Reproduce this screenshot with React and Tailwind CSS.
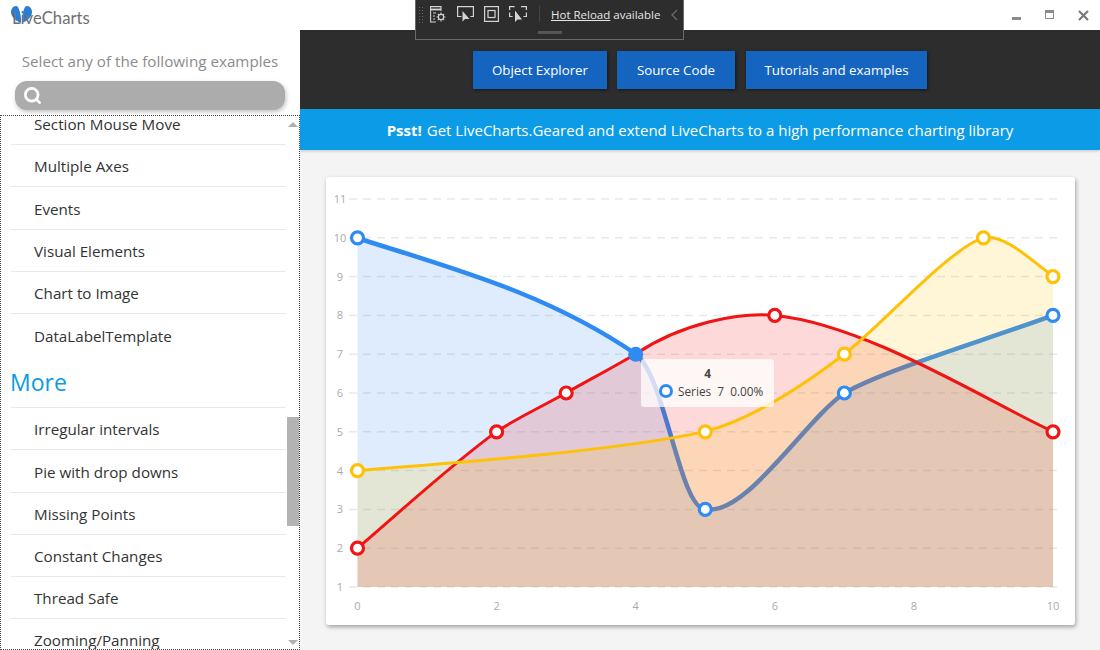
import { Search } from 'lucide-react';

const FONT = "font-['Open_Sans','Noto_Sans',sans-serif]";

const X = (v) => 357.5 + v * 69.55;
const Y = (v) => 587 - (v - 1) * 38.8;

const BLUE = [[0, 10], [4, 7], [5, 3], [7, 6], [10, 8]];
const RED = [[0, 2], [2, 5], [3, 6], [4, 7], [6, 8], [10, 5]];
const YELLOW = [[0, 4], [5, 5], [7, 7], [9, 10], [10, 9]];

// curves traced by hand from the picture, chart area pixel coordinates
const BLUE_LINE = 'M357.5 238 C450 268 545 292 635.7 354 C665 375 680 509 705 509 C745 518 805 420 844.5 393 C885 370 980 342 1053 315.400';
const RED_LINE = 'M357.5 548.200 C403.500 509 450.600 465 496.600 431.600 C519.600 416.600 543 406 566 393 C589 380 612.700 367.500 635.700 354 C682 323 740 312 775 315.400 C865 324 985 400 1053 431.600';
const YELLOW_LINE = 'M357.5 470.600 C470 462 620 450 705 431.600 C750 420 800 388 844.500 354 C880 327 950 248 983.600 237.600 C1003 234 1028 257 1053 276.400';

const GROUP_ONE = ['Multiple Axes', 'Events', 'Visual Elements', 'Chart to Image'];
const GROUP_TWO = ['Irregular intervals', 'Pie with drop downs', 'Missing Points', 'Constant Changes', 'Thread Safe'];

function Dots({ points, color }) {
  return points.map(([a, b]) => (
    <circle key={`${a}-${b}`} cx={X(a)} cy={Y(b)} r="6" fill="#fff" stroke={color} strokeWidth="3.2" />
  ));
}

function area(line, endX) {
  return `${line} L${endX} 587 L357.5 587 Z`;
}

function Chart() {
  return (
    <svg className="block" width="749" height="448" viewBox="326 177 749 448">
      <path d={area(BLUE_LINE, 1053)} fill="#2f8bf2" fillOpacity="0.16" />
      <path d={BLUE_LINE} fill="none" stroke="#2f8bf2" strokeWidth="4.5" />
      <path d={area(RED_LINE, 1053)} fill="#f01414" fillOpacity="0.16" />
      <path d={area(YELLOW_LINE, 1053)} fill="#ffc107" fillOpacity="0.16" />
      {[1, 2, 3, 4, 5, 6, 7, 8, 9, 10, 11].map((v) => (
        <g key={v}>
          <line x1="349" x2="1058" y1={Y(v)} y2={Y(v)} stroke="#8a8a8a" strokeOpacity="0.2" strokeWidth="1.5" strokeDasharray="8 6" />
          <text x="340" y={Y(v) + 4} textAnchor="middle" fontSize="11" fill="#aaa">{v}</text>
        </g>
      ))}
      {[0, 2, 4, 6, 8, 10].map((v) => (
        <text key={v} x={X(v)} y="610" textAnchor="middle" fontSize="11" fill="#aaa">{v}</text>
      ))}
      <path d={RED_LINE} fill="none" stroke="#f01414" strokeWidth="3" />
      <path d={YELLOW_LINE} fill="none" stroke="#ffc107" strokeWidth="3" />
      <Dots points={BLUE.filter(([a]) => a !== 4)} color="#2f8bf2" />
      <Dots points={RED.filter(([a]) => a !== 4)} color="#f01414" />
      <Dots points={YELLOW} color="#ffc107" />
      <circle cx={X(4)} cy={Y(7)} r="7.5" fill="#2f8bf2" />
    </svg>
  );
}

function Row({ label, line = true }) {
  return (
    <div className={`h-[42.2px] ml-[10px] mr-[13px] pl-[23px] pt-[2px] flex items-center text-[15.200px] text-[#333] ${line ? 'border-b border-[#e8e8e8]' : ''}`}>
      {label}
    </div>
  );
}

function ToolbarIcons() {
  return (
    <div className="ml-[6px] flex items-start text-[#d4d4d4]">
      <svg width="16" height="17" viewBox="0 0 16 17" fill="none" stroke="currentColor" strokeWidth="1.100">
        <path d="M6 16H.6V.6H11V5" />
        <path d="M.6 3.500H11" strokeWidth="1.800" />
        <path d="M3 7h3M3 10h2M3 13h2" />
        <circle cx="11" cy="11" r="2.600" />
        <path d="M11 6.500v1.500M11 14v1.500M6.500 11H8M14 11h1.500M7.800 7.800l1 1M13.200 13.200l1 1M14.200 7.800l-1 1M8.800 13.200l-1 1" />
      </svg>
      <svg className="ml-[11px]" width="17" height="16" viewBox="0 0 17 16" fill="none" stroke="currentColor" strokeWidth="1.200">
        <path d="M4.500 10.500H.6V.6h15.800v9.900h-3" />
        <path d="M5.500 5v10.500l2.500-2.500h4.500z" fill="currentColor" stroke="none" />
      </svg>
      <svg className="ml-[10px]" width="15" height="16" viewBox="0 0 15 16" fill="none" stroke="currentColor" strokeWidth="1.200">
        <rect x="0.6" y="0.6" width="13.800" height="14.800" />
        <rect x="4" y="4.500" width="7" height="7" />
      </svg>
      <svg className="ml-[10px]" width="18" height="16" viewBox="0 0 18 16" fill="none" stroke="currentColor" strokeWidth="1.200">
        <path d="M.6 4V.6h5M12 .6h5.400V4M.6 6.500v4h3M17.400 6.500v4h-3" />
        <path d="M6 4.500V16l2.500-2.500H13z" fill="currentColor" stroke="none" />
      </svg>
    </div>
  );
}

export default function App() {
  return (
    <div className={`relative w-[1100px] h-[650px] overflow-hidden bg-white flex flex-col ${FONT}`}>
      {/* title bar */}
      <header className="h-[30px] shrink-0 flex items-center justify-between bg-white">
        <div className="relative h-[30px] pl-[12px] font-['Lato',sans-serif] text-[16.700px] leading-[36px] text-[#707070]">
          <svg className="absolute left-[11px] top-[6px]" width="21" height="17" viewBox="0 0 21 17">
            <path d="M10 15C10 8 8 0 5 0 2 0 0 3 0 6c0 4 4 9 10 11z" fill="#2b7fd0" />
            <path d="M11 15c0-7 2-15 5-15 3 0 5 3 5 6 0 4-4 9-10 11z" fill="#2b7fd0" />
          </svg>
          <span className="relative">LiveCharts</span>
        </div>
        <div className="flex items-center gap-[24px] pr-[11px]">
          <div className="w-[9px] h-[3px] mt-[6px] bg-[#8a8a8a]" />
          <div className="w-[9px] h-[9px] border border-[#8a8a8a] border-t-[3px] -mt-[2px]" />
          <svg width="11" height="11" viewBox="0 0 11 11" stroke="#7a7a7a" strokeWidth="2.200">
            <path d="M1 1l9 9M10 1l-9 9" />
          </svg>
        </div>
      </header>

      <div className="flex-1 flex min-h-0">
        {/* sidebar */}
        <aside className="w-[300px] shrink-0 flex flex-col bg-white">
          <p className="pt-[20px] text-center text-[15.200px] leading-[22px] text-[#8c8c8c]">
            Select any of the following examples
          </p>
          <div className="mt-[9px] ml-[15px] w-[270px] h-[29px] shrink-0 rounded-[12px] bg-[#acacac] shadow-[1px_2px_4px_rgba(0,0,0,0.25)] flex items-center pl-[8px]">
            <Search size={19} strokeWidth={3.500} color="#fff" />
          </div>
          <div className="relative mt-[5px] flex-1 min-h-0 overflow-hidden border border-dotted border-[#444]">
            <div className="-mt-[13px]">
              <Row label="Section Mouse Move" />
              {GROUP_ONE.map((label) => (
                <Row key={label} label={label} />
              ))}
              <Row label="DataLabelTemplate" line={false} />
              <div className="ml-[10px] mr-[13px] h-[52px] flex items-end pb-[9px] border-b border-[#e8e8e8] text-[23px] leading-[32px] text-[#0c9be6]">
                <span className="-ml-px">More</span>
              </div>
              {GROUP_TWO.map((label) => (
                <Row key={label} label={label} />
              ))}
              <Row label="Zooming/Panning" />
            </div>
            {/* scrollbar */}
            <div className="absolute right-px top-[6px] w-0 h-0 border-x-[5px] border-x-transparent border-b-[5px] border-b-[#b0b0b0]" />
            <div className="absolute right-0 top-[301px] w-[12px] h-[109px] bg-[#b3b3b3]" />
            <div className="absolute right-px bottom-[4px] w-0 h-0 border-x-[5px] border-x-transparent border-t-[5px] border-t-[#b0b0b0]" />
          </div>
        </aside>

        {/* main */}
        <main className="flex-1 flex flex-col min-w-0 bg-[#f4f4f4]">
          <div className="h-[79px] shrink-0 bg-[#2d2d2d] flex items-start pt-[21px] pl-[173px] gap-[10px]">
            <button className="w-[134px] h-[38px] pt-[2px] bg-[#1565c0] text-white text-[13.300px] shadow-[1px_1px_3px_rgba(0,0,0,0.5)]">Object Explorer</button>
            <button className="w-[118px] h-[38px] pt-[2px] bg-[#1565c0] text-white text-[13.300px] shadow-[1px_1px_3px_rgba(0,0,0,0.5)]">Source Code</button>
            <button className="ml-px w-[181px] h-[38px] pt-[2px] bg-[#1565c0] text-white text-[13.300px] shadow-[1px_1px_3px_rgba(0,0,0,0.5)]">Tutorials and examples</button>
          </div>
          <div className="h-[41px] shrink-0 pt-[2px] bg-[#0c9be6] flex items-center justify-center text-white text-[15px] shadow-[0_1px_3px_rgba(0,0,0,0.2)]">
            <b className="mr-[5px] font-bold">Psst!</b> Get LiveCharts.Geared and extend LiveCharts to a high performance charting library
          </div>
          <div className="pt-[27px] pl-[26px]">
            <div className="relative w-[749px] h-[448px] bg-white rounded-[3px] shadow-[1px_2px_4px_rgba(0,0,0,0.35)]">
              <Chart />
              {/* tooltip */}
              <div className="absolute left-[315px] top-[182px] w-[133px] h-[48px] rounded-[3px] bg-white/75 text-[#444] text-[11.800px] leading-[16px]">
                <div className="pt-[6px] text-center font-bold">4</div>
                <div className="mt-[2px] flex items-center pl-[18px]">
                  <span className="w-[14px] h-[14px] rounded-full bg-white border-[3px] border-[#2f8bf2]" />
                  <span className="ml-[5px] whitespace-nowrap">Series&nbsp; 7&nbsp; 0.00%</span>
                </div>
              </div>
            </div>
          </div>
        </main>
      </div>

      {/* hot reload toolbar */}
      <div className="absolute left-[415px] top-0 w-[269px] h-[40px] bg-[#2d2d2d] border border-t-0 border-[#6a6a6a] flex items-start pt-[6px]">
        <div className="ml-[2px] w-[6px] h-[17px] bg-[radial-gradient(#666_1px,transparent_1px)] bg-[length:3px_3px]" />
        <ToolbarIcons />
        <div className="ml-[12px] w-px h-[16px] bg-[#444]" />
        <div className="ml-[11px] text-[11.500px] leading-[20px] -mt-px text-[#e6e6e6] whitespace-nowrap">
          <span className="underline">Hot Reload</span> available
        </div>
        <svg className="ml-[11px] mt-[3px]" width="7" height="12" viewBox="0 0 7 12" fill="none" stroke="#6e6e6e" strokeWidth="1.200">
          <path d="M6 1L1 6l5 5" />
        </svg>
        <div className="absolute left-[122px] top-[31px] w-[24px] h-[3px] bg-[#555]" />
      </div>
    </div>
  );
}
